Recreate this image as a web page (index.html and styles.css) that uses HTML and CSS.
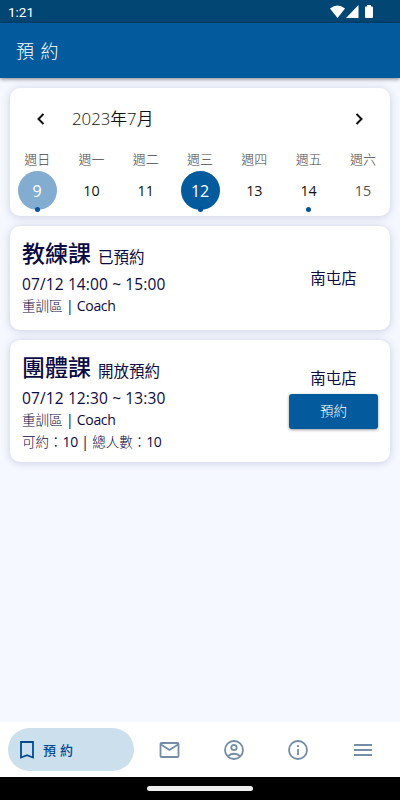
FILE: index.html
```html
<!DOCTYPE html>
<html lang="zh-Hant">
<head>
<meta charset="utf-8">
<title>預約</title>
<link rel="stylesheet" href="styles.css">
</head>
<body>
<div class="app">
  <div class="status">
    <span class="clock">1:21</span>
    <svg class="status-icons" width="44" height="14" viewBox="0 0 44 14" fill="#fff">
      <path d="M0 3.500Q7.500-2.500 15 3.500L7.500 13Z"/>
      <path d="M28.500 0V13H16Z"/>
      <path d="M37 0h4v1.500h1q1 0 1 1V12q0 1-1 1h-6q-1 0-1-1V2.500q0-1 1-1h1Z"/>
    </svg>
  </div>
  <header class="bar"><h1>預 約</h1></header>
  <main>
    <section class="card calendar">
      <div class="month">
        <svg width="8" height="12" viewBox="0 0 8 12"><path d="M6.500 1L1.500 6l5 5"/></svg>
        <span class="month-name">2023年7月</span>
        <svg width="8" height="12" viewBox="0 0 8 12"><path d="M1.500 1l5 5-5 5"/></svg>
      </div>
      <div class="week">
        <div class="day"><span class="name">週日</span><span class="num today">9<i class="dot"></i></span></div>
        <div class="day"><span class="name">週一</span><span class="num">10</span></div>
        <div class="day"><span class="name">週二</span><span class="num">11</span></div>
        <div class="day"><span class="name">週三</span><span class="num selected">12<i class="dot"></i></span></div>
        <div class="day"><span class="name">週四</span><span class="num">13</span></div>
        <div class="day"><span class="name">週五</span><span class="num">14<i class="dot"></i></span></div>
        <div class="day"><span class="name">週六</span><span class="num muted">15</span></div>
      </div>
    </section>
    <section class="card course">
      <div class="details">
        <div class="heading"><h2>教練課</h2><span class="state">已預約</span></div>
        <div class="time">07/12 14:00 ~ 15:00</div>
        <div class="info">重訓區 <span class="latin">| Coach</span></div>
      </div>
      <div class="side"><span class="branch">南屯店</span></div>
    </section>
    <section class="card course group">
      <div class="details">
        <div class="heading"><h2>團體課</h2><span class="state">開放預約</span></div>
        <div class="time">07/12 12:30 ~ 13:30</div>
        <div class="info">重訓區 <span class="latin">| Coach</span></div>
        <div class="info">可約：<span class="latin">10 |</span> 總人數：<span class="latin">10</span></div>
      </div>
      <div class="side"><span class="branch">南屯店</span><button class="book">預約</button></div>
    </section>
  </main>
  <nav class="tabs">
    <div class="tab active">
      <svg width="24" height="24" viewBox="0 0 24 24"><path d="M6 4h12v15.500l-6-2.400-6 2.400Z"/></svg>
      <span>預 約</span>
    </div>
    <svg class="tab" width="24" height="24" viewBox="0 0 24 24"><rect x="3.500" y="5" width="18" height="14" rx="1"/><path d="M4 6.500l8.500 5.500 8.500-5.500"/></svg>
    <svg class="tab" width="24" height="24" viewBox="0 0 24 24"><circle cx="12" cy="12" r="9"/><circle cx="12" cy="9.500" r="2.700"/><path d="M6 18q6-4.500 12 0"/></svg>
    <svg class="tab" width="24" height="24" viewBox="0 0 24 24"><circle cx="12" cy="12" r="9"/><path d="M12 11v6M12 7v2"/></svg>
    <svg class="tab" width="24" height="24" viewBox="0 0 24 24"><path d="M3 7h18M3 12h18M3 17h18"/></svg>
  </nav>
  <div class="system"><div class="handle"></div></div>
</div>
</body>
</html>
```
FILE: styles.css
```css
* { box-sizing: border-box; }
body {
  margin: 0;
  font-family: "Open Sans", "Noto Sans CJK TC", sans-serif;
  font-weight: 300;
  color: #0c0a42;
}
h1, h2 { margin: 0; }
.app { width: 400px; height: 800px; display: flex; flex-direction: column; background: #f6f8ff; }
.status {
  height: 23px;
  flex: none;
  display: flex;
  align-items: center;
  justify-content: space-between;
  padding: 0 26px 0 8px;
  background: #024674;
  color: #fff;
}
.clock { font: 400 13.5px/23px Roboto, sans-serif; padding-top: 1px; }
.bar {
  height: 55px;
  flex: none;
  display: flex;
  align-items: center;
  padding: 0 16px;
  background: #035b9d;
  color: #fff;
  box-shadow: 0 1px 4px rgba(0, 0, 0, .5);
}
.bar h1 { font-size: 18px; font-weight: 300; line-height: 26px; letter-spacing: .9px; }
main { flex: 1; padding: 10px; display: flex; flex-direction: column; gap: 10px; }
.card { background: #fff; border-radius: 10px; box-shadow: 0 1px 8px rgba(60, 80, 130, .24); }
.calendar { height: 128px; color: #111; }
.month { height: 61px; display: flex; align-items: center; padding: 0 27px; }
.month svg { fill: none; stroke: #111; stroke-width: 2; }
.month-name { flex: 1; padding-left: 27px; font-size: 16.8px; font-weight: 340; line-height: 24px; }
.week { display: grid; grid-template-columns: repeat(7, 54.3px); }
.day { display: flex; flex-direction: column; align-items: center; }
.name { height: 22px; font-size: 13px; line-height: 20px; color: #444; white-space: nowrap; }
.num {
  position: relative;
  width: 39px;
  height: 39px;
  border-radius: 50%;
  font-size: 14.3px;
  font-weight: 385;
  line-height: 40px;
  text-align: center;
}
.today, .selected { color: #fff; font-size: 16px; }
.today { background: #82add0; }
.selected { background: #035b9d; }
.muted { color: #555; }
.dot {
  position: absolute;
  left: 17px;
  bottom: -2px;
  width: 5px;
  height: 5px;
  border-radius: 50%;
  background: #07509c;
}
.course { height: 104px; display: flex; padding: 11px 12px 12px; }
.group { height: 122px; }
.details { flex: 1; }
.heading { height: 36px; display: flex; align-items: baseline; gap: 7px; line-height: 32px; }
h2 { font-size: 23px; font-weight: 500; }
.state, .branch { font-size: 15.5px; font-weight: 400; }
.state { position: relative; top: 1px; }
.time { height: 22px; font-size: 15.5px; font-weight: 380; line-height: 22px; letter-spacing: .12px; }
.info { height: 21.500px; font-size: 13.5px; line-height: 22px; }
.latin { font-size: 14px; font-weight: 380; letter-spacing: -.3px; }
.side { width: 89px; display: flex; flex-direction: column; align-items: center; justify-content: center; padding-top: 1px; }
.group .side { justify-content: flex-start; padding-top: 15px; }
.branch { line-height: 24px; }
.book {
  width: 89px;
  height: 35px;
  margin-top: 4px;
  padding: 0;
  border: 0;
  border-radius: 3px;
  background: #035b9d;
  box-shadow: 0 1px 3px rgba(0, 0, 0, .4);
  color: #fff;
  font: 300 13.5px/35px "Open Sans", "Noto Sans CJK TC", sans-serif;
}
.tabs { height: 55px; flex: none; display: flex; align-items: center; background: #fff; padding-left: 8px; gap: 40.500px; }
.tab { flex: none; fill: none; stroke: #758da6; stroke-width: 1.8; }
.active {
  width: 126px;
  height: 43px;
  margin-right: -17.500px;
  border-radius: 22px;
  display: flex;
  align-items: center;
  gap: 4px;
  padding-left: 7px;
  background: #ccdfed;
  color: #034a93;
  stroke: #034a93;
  font-size: 13px;
  font-weight: 500;
}
.active span { letter-spacing: .3px; stroke: none; }
.system { height: 23px; flex: none; display: flex; justify-content: center; padding-top: 9px; background: #000; }
.handle { width: 106px; height: 5px; border-radius: 3px; background: #eee; }
```
